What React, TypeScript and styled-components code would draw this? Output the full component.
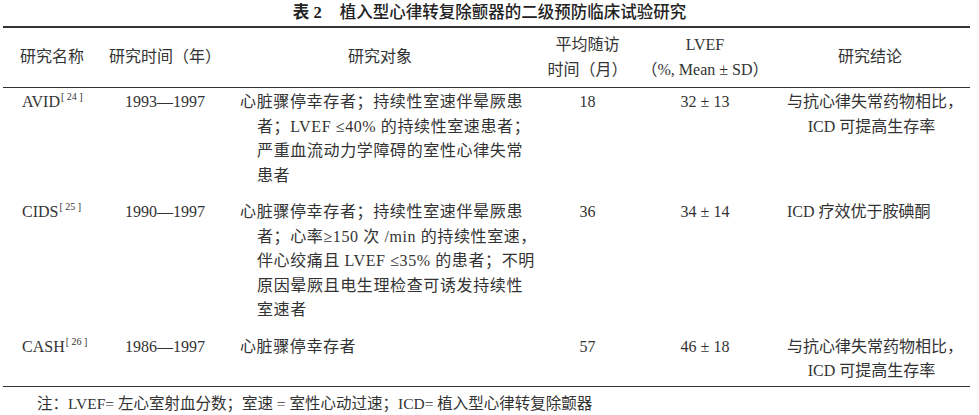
import React from "react";
import styled, { createGlobalStyle } from "styled-components";

const GlobalStyle = createGlobalStyle`
	html, body {
		margin: 0;
		padding: 0;
		background: #fff;
	}
	body {
		font-family: "Liberation Serif", "Noto Sans CJK SC", serif;
		color: #333;
	}
`;

const Page = styled.div`
	width: 979px;
	height: 415px;
	overflow: hidden;
`;

const Title = styled.div`
	height: 26px;
	line-height: 26px;
	text-align: center;
	font-size: 16.5px;
	color: #222;
	font-weight: 500;
`;

const TableNo = styled.span`
	font-weight: 700;
	margin-right: 18px;
`;

const Table = styled.table`
	margin-left: 3px;
	width: 967px;
	border-collapse: collapse;
	table-layout: fixed;
	font-size: 16px;
	line-height: 24.5px;
`;

const Col = styled.col<{ $w: number }>`
	width: ${(p) => p.$w}px;
`;

const Head = styled.thead`
	border-top: 2px solid #333;
	border-bottom: 1px solid #333;
`;

const HeadCell = styled.th<{ $align?: "left" | "center"; $pl?: number }>`
	font-weight: normal;
	text-align: ${(p) => p.$align || "center"};
	padding: 5px 0 5px ${(p) => p.$pl || 0}px;
	vertical-align: middle;
	white-space: nowrap;
`;

const Body = styled.tbody`
	border-bottom: 1px solid #333;
`;

const Row = styled.tr<{ $last?: boolean }>`
	& > td {
		padding-bottom: ${(p) => (p.$last ? 2 : 10)}px;
	}
`;

const Cell = styled.td<{ $align?: "left" | "center"; $pl?: number; $pr?: number }>`
	text-align: ${(p) => p.$align || "center"};
	vertical-align: top;
	padding-top: 2px;
	padding-left: ${(p) => p.$pl || 0}px;
	padding-right: ${(p) => p.$pr || 0}px;
	white-space: nowrap;
`;

const Ref = styled.sup`
	font-size: 10px;
	line-height: 0;
	margin-left: 1px;
	vertical-align: 7px;
`;

const Latin = styled.span`
	font-family: "Liberation Serif", serif;
`;

const Line = styled.div<{ $indent?: boolean; $justify?: boolean }>`
	padding-left: ${(p) => (p.$indent ? 17 : 0)}px;
	letter-spacing: 0.6px;
	text-align: ${(p) => (p.$justify ? "justify" : "left")};
	text-align-last: ${(p) => (p.$justify ? "justify" : "left")};
`;

const Note = styled.div`
	padding: 6px 0 0 37px;
	font-size: 15.5px;
	line-height: 22px;
	color: #333;
`;

// keep latin runs in the serif face when mixed with CJK text
function Mixed({ text }: { text: string }) {
	const parts = text.split(/([A-Za-z0-9%≤≥±=\/\.\-]+)/);
	return (
		<>
			{parts.map((part, i) =>
				i % 2 === 1 ? <Latin key={i}>{part}</Latin> : <React.Fragment key={i}>{part}</React.Fragment>
			)}
		</>
	);
}

type Study = {
	name: string;
	ref: string;
	years: string;
	subjects: string[];
	follow: string;
	lvef: string;
	conclusion: string[];
	conclusionAlign: "left" | "center";
};

const studies: Study[] = [
	{
		name: "AVID",
		ref: "[ 24 ]",
		years: "1993—1997",
		subjects: [
			"心脏骤停幸存者；持续性室速伴晕厥患",
			"者；LVEF ≤40% 的持续性室速患者；",
			"严重血流动力学障碍的室性心律失常",
			"患者",
		],
		follow: "18",
		lvef: "32 ± 13",
		conclusion: ["与抗心律失常药物相比，", "ICD 可提高生存率"],
		conclusionAlign: "center",
	},
	{
		name: "CIDS",
		ref: "[ 25 ]",
		years: "1990—1997",
		subjects: [
			"心脏骤停幸存者；持续性室速伴晕厥患",
			"者；心率≥150 次 /min 的持续性室速，",
			"伴心绞痛且 LVEF ≤35% 的患者；不明",
			"原因晕厥且电生理检查可诱发持续性",
			"室速者",
		],
		follow: "36",
		lvef: "34 ± 14",
		conclusion: ["ICD 疗效优于胺碘酮"],
		conclusionAlign: "left",
	},
	{
		name: "CASH",
		ref: "[ 26 ]",
		years: "1986—1997",
		subjects: ["心脏骤停幸存者"],
		follow: "57",
		lvef: "46 ± 18",
		conclusion: ["与抗心律失常药物相比，", "ICD 可提高生存率"],
		conclusionAlign: "center",
	},
];

export default function App() {
	return (
		<Page>
			<GlobalStyle />
			<Title>
				<TableNo>
					表 <Latin>2</Latin>
				</TableNo>
				植入型心律转复除颤器的二级预防临床试验研究
			</Title>
			<Table>
				<colgroup>
					<Col $w={102} />
					<Col $w={120} />
					<Col $w={310} />
					<Col $w={105} />
					<Col $w={130} />
					<Col $w={200} />
				</colgroup>
				<Head>
					<tr>
						<HeadCell $align="left" $pl={17}>
							研究名称
						</HeadCell>
						<HeadCell>研究时间（年）</HeadCell>
						<HeadCell>研究对象</HeadCell>
						<HeadCell>
							平均随访
							<br />
							时间（月）
						</HeadCell>
						<HeadCell>
							<Latin>LVEF</Latin>
							<br />（<Latin>%, Mean ± SD</Latin>）
						</HeadCell>
						<HeadCell>研究结论</HeadCell>
					</tr>
				</Head>
				<Body>
					{studies.map((s, i) => (
						<Row key={s.name} $last={i === studies.length - 1}>
							<Cell $align="left" $pl={19}>
								{s.name}
								<Ref>{s.ref}</Ref>
							</Cell>
							<Cell>{s.years}</Cell>
							<Cell $align="left" $pl={15} $pr={12}>
								{s.subjects.map((line, j) => (
									<Line
										key={j}
										$indent={j > 0}
										$justify={j < s.subjects.length - 1}
									>
										<Mixed text={line} />
									</Line>
								))}
							</Cell>
							<Cell>{s.follow}</Cell>
							<Cell>{s.lvef}</Cell>
							<Cell $align={s.conclusionAlign} $pl={17} $pr={14}>
								{s.conclusion.map((line, j) => (
									<div key={j}>
										<Mixed text={line} />
									</div>
								))}
							</Cell>
						</Row>
					))}
				</Body>
			</Table>
			<Note>
				<Mixed text="注：LVEF= 左心室射血分数；室速 = 室性心动过速；ICD= 植入型心律转复除颤器" />
			</Note>
		</Page>
	);
}
